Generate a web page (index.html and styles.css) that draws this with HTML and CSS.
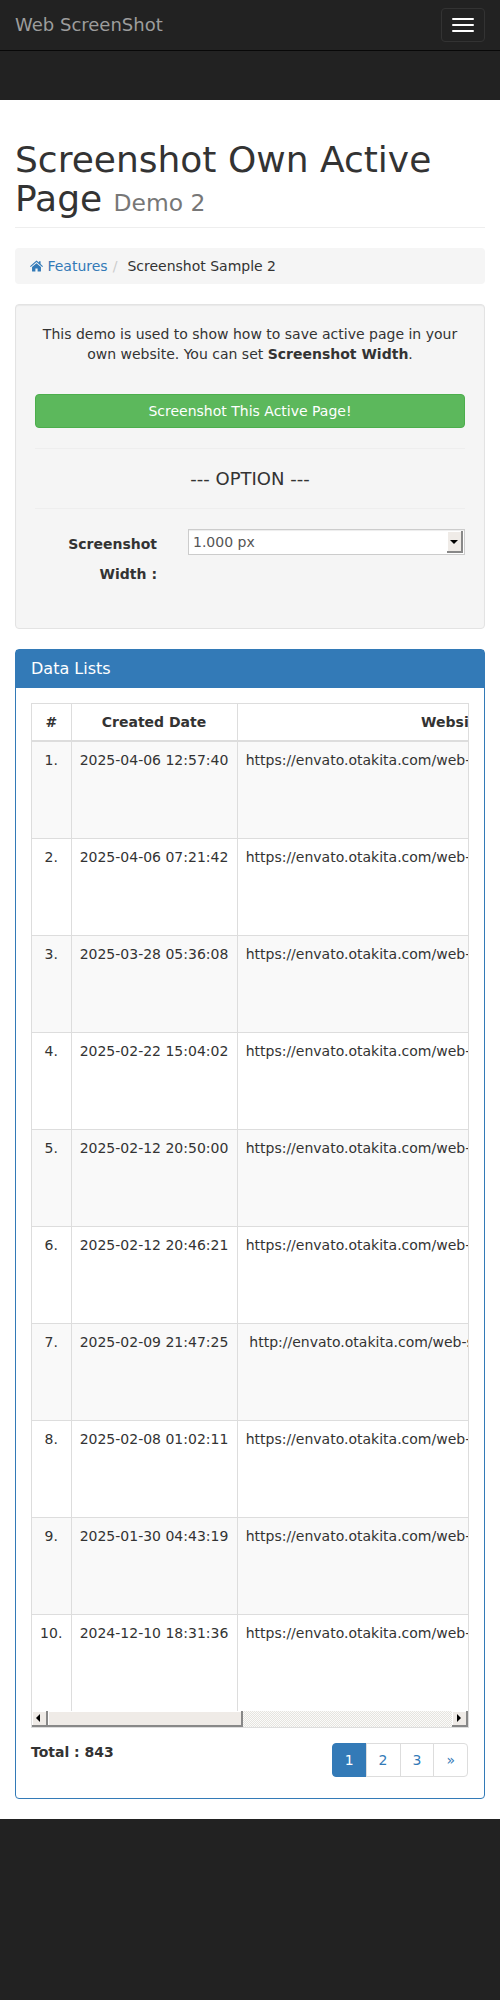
FILE: index.html
```html
<!DOCTYPE html>
<html lang="en">
<head>
  <meta charset="UTF-8" />
  <title>Web ScreenShot - Screenshot Own Active Page</title>
  <link rel="stylesheet" href="styles.css">
</head>
<body>
  <nav class="navbar">
    <div class="navbar-top">
      <a class="brand" href="#">Web ScreenShot</a>
      <button class="toggle" aria-label="Toggle navigation">
        <span class="bar"></span>
        <span class="bar"></span>
        <span class="bar"></span>
      </button>
    </div>
  </nav>

  <div class="page">
    <div class="container">
      <h1 class="page-header">Screenshot Own Active Page <small>Demo 2</small></h1>

      <ol class="breadcrumb">
        <li>
          <a href="#">
            <svg class="home-icon" viewBox="0 0 14 12" width="13" height="12"><path d="M7 0 L9.6 2.3 V1 H11.4 V3.9 L14 6.2 L13.2 7.1 L7 1.8 L0.8 7.1 L0 6.2 Z M2.2 7.2 L7 3 L11.8 7.2 V11.4 Q11.8 12 11.2 12 H8.2 V8.6 H5.8 V12 H2.8 Q2.2 12 2.2 11.4 Z" fill="#337ab7"/></svg>
            Features</a>
        </li>
        <li class="sep">/</li>
        <li>Screenshot Sample 2</li>
      </ol>

      <div class="well">
        <p class="intro">This demo is used to show how to save active page in your own website. You can set <b>Screenshot Width</b>.</p>
        <button class="btn-success">Screenshot This Active Page!</button>
        <hr>
        <h4 class="option-title">--- OPTION ---</h4>
        <hr>
        <div class="form-row">
          <label class="form-label" for="widthSelect">Screenshot Width :</label>
          <div class="select-wrap">
            <select id="widthSelect" class="select">
              <option>1.000 px</option>
              <option>1.200 px</option>
              <option>1.600 px</option>
            </select>
            <span class="select-arrow"></span>
          </div>
        </div>
      </div>

      <div class="panel">
        <div class="panel-heading">Data Lists</div>
        <div class="panel-body">
          <div class="table-wrap">
            <div class="table-clip">
              <table class="data-table">
                <thead>
                  <tr><th class="col-no">#</th><th class="col-date">Created Date</th><th class="col-site">Website</th></tr>
                </thead>
                <tbody>
                  <tr><td>1.</td><td>2025-04-06 12:57:40</td><td>https://envato.otakita.com/web-screenshot/demo/demo2.js</td></tr>
                  <tr><td>2.</td><td>2025-04-06 07:21:42</td><td>https://envato.otakita.com/web-screenshot/demo/demo2.js</td></tr>
                  <tr><td>3.</td><td>2025-03-28 05:36:08</td><td>https://envato.otakita.com/web-screenshot/demo/demo2.js</td></tr>
                  <tr><td>4.</td><td>2025-02-22 15:04:02</td><td>https://envato.otakita.com/web-screenshot/demo/demo2.js</td></tr>
                  <tr><td>5.</td><td>2025-02-12 20:50:00</td><td>https://envato.otakita.com/web-screenshot/demo/demo2.js</td></tr>
                  <tr><td>6.</td><td>2025-02-12 20:46:21</td><td>https://envato.otakita.com/web-screenshot/demo/demo2.js</td></tr>
                  <tr><td>7.</td><td>2025-02-09 21:47:25</td><td>http://envato.otakita.com/web-screenshot/demo/demo2.js</td></tr>
                  <tr><td>8.</td><td>2025-02-08 01:02:11</td><td>https://envato.otakita.com/web-screenshot/demo/demo2.js</td></tr>
                  <tr><td>9.</td><td>2025-01-30 04:43:19</td><td>https://envato.otakita.com/web-screenshot/demo/demo2.js</td></tr>
                  <tr><td>10.</td><td>2024-12-10 18:31:36</td><td>https://envato.otakita.com/web-screenshot/demo/demo2.js</td></tr>
                </tbody>
              </table>
            </div>
            <div class="scrollbar">
              <span class="scroll-btn scroll-left"></span>
              <span class="scroll-thumb"></span>
              <span class="scroll-track"></span>
              <span class="scroll-btn scroll-right"></span>
            </div>
          </div>

          <div class="table-foot">
            <b class="total">Total : 843</b>
            <ul class="pagination">
              <li class="active"><a href="#">1</a></li>
              <li><a href="#">2</a></li>
              <li><a href="#">3</a></li>
              <li><a href="#">»</a></li>
            </ul>
          </div>
        </div>
      </div>
    </div>
  </div>

  <footer class="footer"></footer>
</body>
</html>
```

FILE: styles.css
```css
* {
  box-sizing: border-box;
}

body {
  margin: 0;
  min-height: 2000px;
  display: flex;
  flex-direction: column;
  background: #222;
  color: #333;
  font-family: "DejaVu Sans", sans-serif;
  font-size: 14px;
  line-height: 20px;
}

a {
  color: #337ab7;
  text-decoration: none;
}

.navbar {
  height: 100px;
  background: #222;
}

.navbar-top {
  height: 51px;
  padding: 8px 15px 0;
  display: flex;
  justify-content: space-between;
  border-bottom: 1px solid #080808;
}

.brand {
  color: #9d9d9d;
  font-size: 18px;
  line-height: 34px;
}

.toggle {
  width: 44px;
  height: 34px;
  padding: 9px 10px;
  display: flex;
  flex-direction: column;
  gap: 4px;
  background: none;
  border: 1px solid #333;
  border-radius: 4px;
}

.bar {
  display: block;
  width: 22px;
  height: 2px;
  background: #fff;
  border-radius: 1px;
}

.page {
  background: #fff;
}

.container {
  padding: 0 15px;
  display: flow-root;
}

.page-header {
  margin: 40px 0 20px;
  padding-bottom: 9px;
  border-bottom: 1px solid #eee;
  font-size: 36px;
  font-weight: 500;
  line-height: 39px;
}

.page-header small {
  font-size: 65%;
  font-weight: 400;
  line-height: 1;
  color: #777;
}

.breadcrumb {
  margin: 0 0 20px;
  padding: 8px 15px;
  display: flex;
  list-style: none;
  background: #f5f5f5;
  border-radius: 4px;
}

.home-icon {
  vertical-align: -1px;
}

.sep {
  padding: 0 5px;
  margin-right: 5px;
  color: #ccc;
}

.well {
  margin-bottom: 20px;
  padding: 19px;
  background: #f5f5f5;
  border: 1px solid #e3e3e3;
  border-radius: 4px;
  box-shadow: inset 0 1px 1px rgba(0,0,0,0.05);
}

.intro {
  margin: 0 0 30px;
  text-align: center;
}

.btn-success {
  display: block;
  width: 100%;
  padding: 6px 12px;
  color: #fff;
  background: #5cb85c;
  border: 1px solid #4cae4c;
  border-radius: 4px;
  font: inherit;
}

.well hr {
  margin: 20px 0;
  border: 0;
  border-top: 1px solid #eee;
}

.option-title {
  margin: 0;
  font-size: 18px;
  font-weight: 500;
  line-height: 19px;
  text-align: center;
}

.form-row {
  display: grid;
  grid-template-columns: 122px 1fr;
  column-gap: 31px;
  margin-bottom: 20px;
}

.form-label {
  font-weight: bold;
  line-height: 30px;
  text-align: right;
}

.select-wrap {
  position: relative;
  height: 26px;
}

.select {
  display: block;
  width: 100%;
  height: 26px;
  padding: 0 4px;
  color: #555;
  background: #fff;
  border: 1px solid #ccc;
  border-radius: 0;
  box-shadow: inset 0 1px 1px rgba(0,0,0,0.075);
  font: inherit;
  appearance: none;
}

.select-arrow {
  position: absolute;
  top: 2px;
  right: 2px;
  width: 16px;
  height: 22px;
  background: #efebe7;
  border-right: 2px solid #888;
  border-bottom: 2px solid #888;
  box-shadow: inset 1px 1px 0 #fff;
}

.select-arrow::before {
  content: "";
  position: absolute;
  top: 9px;
  left: 3px;
  border: 4px solid transparent;
  border-top: 4px solid #000;
  border-bottom: 0;
}

.panel {
  margin-bottom: 20px;
  background: #fff;
  border: 1px solid #337ab7;
  border-radius: 4px;
}

.panel-heading {
  padding: 10px 15px;
  color: #fff;
  background: #337ab7;
  font-size: 16px;
  line-height: 18px;
}

.panel-body {
  padding: 15px;
}

.table-wrap {
  border: 1px solid #ddd;
  border-top: 0;
}

.table-clip {
  overflow: hidden;
  height: 1008px;
}

.data-table {
  width: 637px;
  table-layout: fixed;
  border-collapse: collapse;
}

.col-no {
  width: 39px;
}

.col-date {
  width: 166px;
}

.col-site {
  width: 432px;
}

.data-table th,
.data-table td {
  padding: 8px;
  border: 1px solid #ddd;
  text-align: center;
  vertical-align: top;
  white-space: nowrap;
}

.data-table th {
  border-bottom-width: 2px;
}

.data-table td {
  height: 97px;
}

.data-table th:first-child,
.data-table td:first-child {
  border-left: 0;
}

.data-table tbody tr:nth-child(odd) {
  background: #f9f9f9;
}

.scrollbar {
  height: 16px;
  display: flex;
  background: #e8e6e1;
}

.scroll-btn {
  position: relative;
  flex: none;
  width: 16px;
  background: #efebe7;
  border-right: 2px solid #888;
  border-bottom: 2px solid #888;
  box-shadow: inset 1px 1px 0 #fff;
}

.scroll-btn::before {
  content: "";
  position: absolute;
  top: 3px;
  left: 4px;
  border: 4px solid transparent;
}

.scroll-left::before {
  left: 4px;
  border-right: 4px solid #000;
  border-left: 0;
}

.scroll-right::before {
  left: 5px;
  border-left: 4px solid #000;
  border-right: 0;
}

.scroll-thumb {
  flex: none;
  width: 195px;
  background: #efebe7;
  border-right: 2px solid #888;
  border-bottom: 2px solid #888;
  box-shadow: inset 1px 1px 0 #fff;
}

.scroll-track {
  flex: 1;
  background: repeating-conic-gradient(#e6e4df 0 25%, #fbfbfa 0 50%) 0 0 / 2px 2px;
}

.table-foot {
  margin-top: 15px;
  display: flex;
  justify-content: space-between;
  align-items: flex-start;
}

.total {
  line-height: 18px;
}

.pagination {
  margin: 0 1px 6px 0;
  padding: 0;
  display: flex;
  list-style: none;
}

.pagination a {
  display: block;
  margin-left: -1px;
  padding: 6px 12px;
  background: #fff;
  border: 1px solid #ddd;
}

.pagination li:first-child a {
  margin-left: 0;
  border-radius: 4px 0 0 4px;
}

.pagination li:last-child a {
  border-radius: 0 4px 4px 0;
}

.pagination .active a {
  color: #fff;
  background: #337ab7;
  border-color: #337ab7;
}

.footer {
  flex: 1;
  background: #222;
}
```
